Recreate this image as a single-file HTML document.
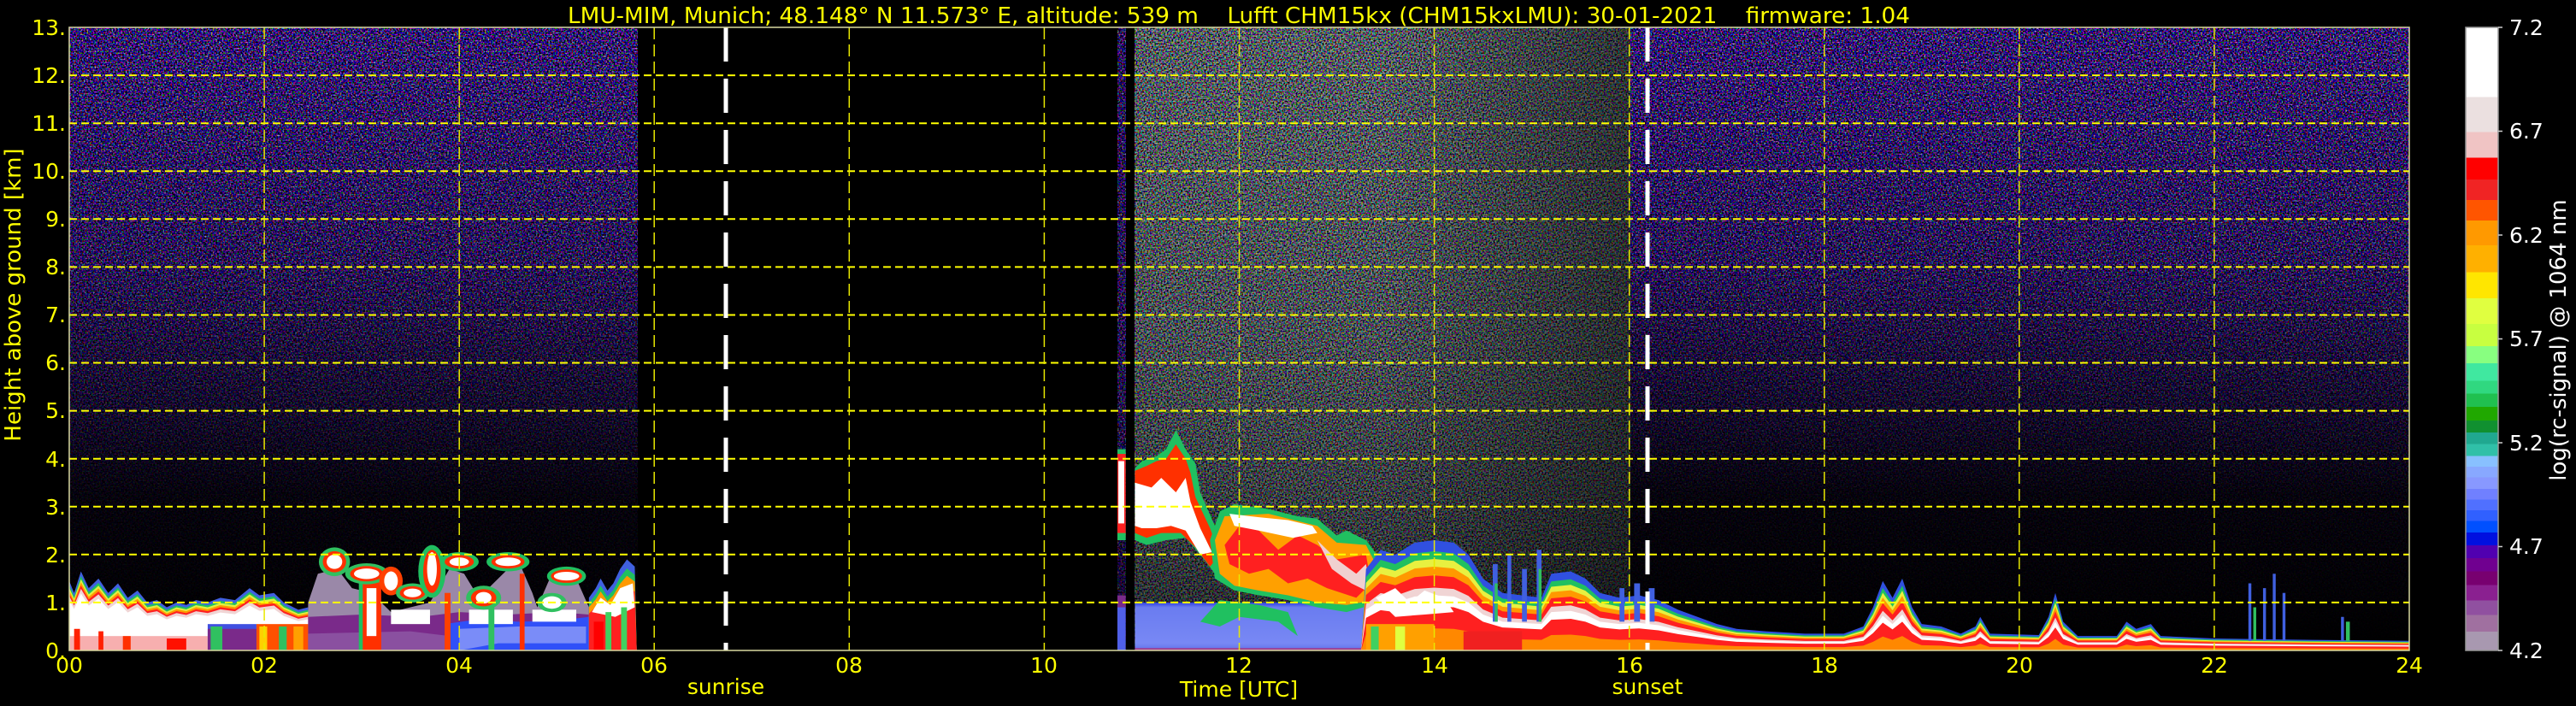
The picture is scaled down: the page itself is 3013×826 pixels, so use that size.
<!DOCTYPE html>
<html><head><meta charset="utf-8"><style>
html,body{margin:0;padding:0;background:#000;}
svg{display:block;}
text{font-family:"DejaVu Sans","Liberation Sans",sans-serif;}
</style></head><body>
<svg width="3013" height="826" viewBox="0 0 3013 826" xmlns="http://www.w3.org/2000/svg">
<defs>
<filter id="nd" x="0" y="0" width="1" height="1">
<feTurbulence type="fractalNoise" baseFrequency="0.55" numOctaves="1" seed="4"/>
<feColorMatrix values="3 0 0 0 -1.5  0 3 0 0 -1.65  0 0 3.2 0 -1.3  0 0 0 0 1"/>
</filter>
<filter id="nb" x="0" y="0" width="1" height="1">
<feTurbulence type="fractalNoise" baseFrequency="0.55" numOctaves="1" seed="9"/>
<feColorMatrix values="3.4 0 0 0 -1.45  0 3.4 0 0 -1.4  0 0 3.4 0 -1.35  0 0 0 0 1"/>
</filter>
<linearGradient id="fade" x1="0" y1="32" x2="0" y2="761" gradientUnits="userSpaceOnUse">
<stop offset="0" stop-color="#000" stop-opacity="0.15"/>
<stop offset="0.38" stop-color="#000" stop-opacity="0.35"/>
<stop offset="0.6" stop-color="#000" stop-opacity="0.65"/>
<stop offset="0.75" stop-color="#000" stop-opacity="0.9"/>
<stop offset="1" stop-color="#000" stop-opacity="1"/>
</linearGradient>
<linearGradient id="fadem" x1="0" y1="32" x2="0" y2="761" gradientUnits="userSpaceOnUse">
<stop offset="0" stop-color="#000" stop-opacity="0.3"/>
<stop offset="0.5" stop-color="#000" stop-opacity="0.4"/>
<stop offset="0.8" stop-color="#000" stop-opacity="0.55"/>
<stop offset="1" stop-color="#000" stop-opacity="0.7"/>
</linearGradient>
<linearGradient id="fadeh" x1="1327" y1="0" x2="1907" y2="0" gradientUnits="userSpaceOnUse">
<stop offset="0" stop-color="#000" stop-opacity="0"/>
<stop offset="0.5" stop-color="#000" stop-opacity="0"/>
<stop offset="1" stop-color="#000" stop-opacity="0.45"/>
</linearGradient>
<linearGradient id="blueg" x1="0" y1="0" x2="0" y2="1">
<stop offset="0" stop-color="#6070e8"/><stop offset="0.15" stop-color="#7888f4"/><stop offset="0.9" stop-color="#6a7cf0"/><stop offset="1" stop-color="#3040e0"/>
</linearGradient>
<linearGradient id="cb" x1="0" y1="0" x2="0" y2="1">
<stop offset="0" stop-color="#fff"/><stop offset="0.112" stop-color="#fff"/>
<stop offset="0.112" stop-color="#ebe0e0"/><stop offset="0.168" stop-color="#ebe0e0"/>
<stop offset="0.168" stop-color="#f0c4c4"/><stop offset="0.209" stop-color="#f0c4c4"/>
<stop offset="0.209" stop-color="#ff0000"/><stop offset="0.244" stop-color="#ff0000"/>
<stop offset="0.244" stop-color="#f02424"/><stop offset="0.277" stop-color="#f02424"/>
<stop offset="0.277" stop-color="#ff5500"/><stop offset="0.31" stop-color="#ff5500"/>
<stop offset="0.31" stop-color="#ff9900"/><stop offset="0.35" stop-color="#ff9900"/>
<stop offset="0.35" stop-color="#ffb000"/><stop offset="0.393" stop-color="#ffb000"/>
<stop offset="0.393" stop-color="#ffe600"/><stop offset="0.435" stop-color="#ffe600"/>
<stop offset="0.435" stop-color="#e0ff40"/><stop offset="0.476" stop-color="#e0ff40"/>
<stop offset="0.476" stop-color="#c8ff40"/><stop offset="0.512" stop-color="#c8ff40"/>
<stop offset="0.512" stop-color="#88ff80"/><stop offset="0.539" stop-color="#88ff80"/>
<stop offset="0.539" stop-color="#40e8a0"/><stop offset="0.567" stop-color="#40e8a0"/>
<stop offset="0.567" stop-color="#30d880"/><stop offset="0.588" stop-color="#30d880"/>
<stop offset="0.588" stop-color="#20c050"/><stop offset="0.609" stop-color="#20c050"/>
<stop offset="0.609" stop-color="#20a800"/><stop offset="0.631" stop-color="#20a800"/>
<stop offset="0.631" stop-color="#109030"/><stop offset="0.65" stop-color="#109030"/>
<stop offset="0.65" stop-color="#20a890"/><stop offset="0.669" stop-color="#20a890"/>
<stop offset="0.669" stop-color="#30c0a8"/><stop offset="0.688" stop-color="#30c0a8"/>
<stop offset="0.688" stop-color="#88c0ff"/><stop offset="0.705" stop-color="#88c0ff"/>
<stop offset="0.705" stop-color="#88a8ff"/><stop offset="0.722" stop-color="#88a8ff"/>
<stop offset="0.722" stop-color="#8898ff"/><stop offset="0.741" stop-color="#8898ff"/>
<stop offset="0.741" stop-color="#7080ff"/><stop offset="0.758" stop-color="#7080ff"/>
<stop offset="0.758" stop-color="#5070ff"/><stop offset="0.775" stop-color="#5070ff"/>
<stop offset="0.775" stop-color="#3060ff"/><stop offset="0.792" stop-color="#3060ff"/>
<stop offset="0.792" stop-color="#0050ff"/><stop offset="0.811" stop-color="#0050ff"/>
<stop offset="0.811" stop-color="#0010e0"/><stop offset="0.831" stop-color="#0010e0"/>
<stop offset="0.831" stop-color="#5000b0"/><stop offset="0.852" stop-color="#5000b0"/>
<stop offset="0.852" stop-color="#700090"/><stop offset="0.873" stop-color="#700090"/>
<stop offset="0.873" stop-color="#780070"/><stop offset="0.895" stop-color="#780070"/>
<stop offset="0.895" stop-color="#8a2090"/><stop offset="0.92" stop-color="#8a2090"/>
<stop offset="0.92" stop-color="#9050a0"/><stop offset="0.943" stop-color="#9050a0"/>
<stop offset="0.943" stop-color="#a070a0"/><stop offset="0.97" stop-color="#a070a0"/>
<stop offset="0.97" stop-color="#a898b0"/><stop offset="1" stop-color="#a898b0"/>
</linearGradient>
<clipPath id="pc"><rect x="81" y="32" width="2737" height="729"/></clipPath>
<polygon id="pA" points="0,0 0,1.45 0.05,1.2 0.12,1.65 0.2,1.3 0.3,1.5 0.4,1.2 0.5,1.4 0.6,1.1 0.7,1.25 0.8,1.0 0.9,1.05 1.0,0.9 1.1,1.0 1.2,0.95 1.3,1.05 1.42,1.0 1.55,1.1 1.7,1.05 1.85,1.3 1.95,1.15 2.1,1.2 2.2,1.0 2.35,0.85 2.45,0.9 2.45,0"/>
<polygon id="pD" points="5.33,0 5.33,1.1 5.4,1.3 5.45,1.5 5.52,1.25 5.58,1.4 5.65,1.7 5.72,1.9 5.8,1.75 5.82,0"/>
<polygon id="pH" points="13.25,0 13.3,1.7 13.45,2.1 13.6,2.0 13.8,2.25 14.0,2.3 14.2,2.25 14.35,2.0 14.5,1.5 14.7,1.2 14.9,1.15 15.1,1.1 15.2,1.6 15.4,1.65 15.55,1.5 15.7,1.2 15.9,1.1 16.1,1.15 16.3,1.05 16.5,0.85 16.7,0.7 16.9,0.55 17.1,0.45 17.4,0.4 17.8,0.35 18.2,0.35 18.4,0.5 18.5,0.9 18.6,1.45 18.7,1.1 18.8,1.5 18.9,0.9 19.0,0.55 19.2,0.5 19.4,0.35 19.55,0.5 19.6,0.7 19.7,0.35 20.2,0.32 20.3,0.7 20.37,1.2 20.45,0.6 20.6,0.3 21.0,0.3 21.1,0.6 21.2,0.45 21.35,0.55 21.45,0.3 22.0,0.25 23.0,0.22 24,0.2 24,0"/>
</defs>

<!-- noise -->
<g clip-path="url(#pc)">
<rect x="81" y="32" width="665" height="729" filter="url(#nd)"/>
<rect x="1307" y="32" width="10" height="729" filter="url(#nd)"/>
<rect x="1327" y="32" width="580" height="729" filter="url(#nb)"/>
<rect x="1907" y="32" width="911" height="729" filter="url(#nd)"/>
<rect x="81" y="32" width="665" height="729" fill="url(#fade)"/>
<rect x="1907" y="32" width="911" height="729" fill="url(#fade)"/>
<rect x="1307" y="32" width="600" height="729" fill="url(#fadem)"/>
<rect x="1327" y="32" width="580" height="729" fill="url(#fadeh)"/>
<rect x="1317" y="32" width="10" height="729" fill="#000"/>

<g transform="translate(81 761) scale(114.0417 -56.077)">
<!-- left block -->
<use href="#pA" fill="#4060e0"/>
<use href="#pA" fill="#20c060" transform="scale(1 0.94)"/>
<use href="#pA" fill="#e0f040" transform="scale(1 0.9)"/>
<use href="#pA" fill="#ff9900" transform="scale(1 0.86)"/>
<use href="#pA" fill="#ff2020" transform="scale(1 0.82)"/>
<use href="#pA" fill="#f0d4d4" transform="scale(1 0.78)"/>
<use href="#pA" fill="#ffffff" transform="scale(1 0.72)"/>
<rect x="0" y="0" width="1.42" height="0.3" fill="#f06060" opacity="0.5"/>
<rect x="0.05" y="0" width="0.06" height="0.45" fill="#ff2000"/>
<rect x="0.3" y="0" width="0.05" height="0.4" fill="#ff2000"/>
<rect x="0.55" y="0" width="0.08" height="0.3" fill="#ff3000"/>
<rect x="1.0" y="0" width="0.2" height="0.25" fill="#ff1000"/>
<rect x="1.42" y="0" width="0.5" height="0.55" fill="#4050e0"/>
<rect x="1.42" y="0" width="0.5" height="0.45" fill="#7a2a8a"/>
<rect x="1.45" y="0" width="0.12" height="0.5" fill="#30c060"/>
<rect x="1.92" y="0" width="0.55" height="0.55" fill="#ff5000"/>
<rect x="1.95" y="0" width="0.08" height="0.5" fill="#ffd000"/>
<rect x="2.15" y="0" width="0.08" height="0.5" fill="#30c060"/>
<rect x="2.3" y="0" width="0.1" height="0.5" fill="#ffa000"/>
<!-- 2.45-5.35 -->
<polygon fill="#9a88a8" points="2.45,0 2.45,1.0 2.55,1.6 2.75,1.7 2.9,1.3 3.1,1.2 3.3,0.8 3.7,1.0 3.9,1.7 4.05,1.6 4.2,1.1 4.4,1.5 4.6,1.9 4.75,1.2 4.8,0.9 4.95,1.6 5.2,1.5 5.33,0.9 5.33,0"/>
<polygon fill="#7a2a8a" points="2.45,0 2.45,0.7 3.0,0.75 3.6,0.7 4.0,0.8 4.5,0.75 5.0,0.8 5.33,0.75 5.33,0"/>
<polygon fill="#8a50a0" points="2.45,0 2.45,0.35 3.5,0.4 3.9,0.3 3.9,0"/>
<polygon fill="#3050f8" points="3.85,0 3.85,0.55 4.2,0.65 4.6,0.6 5.0,0.62 5.33,0.7 5.33,0"/>
<polygon fill="#7a8cf8" points="4.0,0 4.0,0.45 4.6,0.5 5.3,0.5 5.3,0.15 4.4,0.15"/>
<rect x="3.3" y="0.55" width="0.4" height="0.3" fill="#ffffff"/>
<rect x="4.1" y="0.55" width="0.45" height="0.3" fill="#ffffff"/>
<rect x="4.75" y="0.6" width="0.45" height="0.25" fill="#ffffff"/>
<rect x="3.0" y="0" width="0.2" height="1.5" fill="#ff3000"/>
<rect x="3.05" y="0.3" width="0.1" height="1.0" fill="#ffffff"/>
<rect x="2.97" y="0" width="0.04" height="1.5" fill="#20c060"/>
<rect x="3.85" y="0" width="0.06" height="1.2" fill="#ff4000"/>
<rect x="4.3" y="0" width="0.06" height="1.2" fill="#30c060"/>
<rect x="4.62" y="0" width="0.05" height="1.6" fill="#ff3000"/>
<!-- clouds -->
<g>
<ellipse cx="2.72" cy="1.85" rx="0.16" ry="0.3" fill="#30c060"/>
<ellipse cx="2.72" cy="1.85" rx="0.12" ry="0.22" fill="#ff3000"/>
<ellipse cx="2.72" cy="1.85" rx="0.08" ry="0.15" fill="#fff"/>
<ellipse cx="3.05" cy="1.6" rx="0.22" ry="0.22" fill="#30c060"/>
<ellipse cx="3.05" cy="1.6" rx="0.17" ry="0.16" fill="#ff3000"/>
<ellipse cx="3.05" cy="1.6" rx="0.13" ry="0.11" fill="#fff"/>
<ellipse cx="3.3" cy="1.45" rx="0.12" ry="0.3" fill="#ff4000"/>
<ellipse cx="3.3" cy="1.45" rx="0.07" ry="0.2" fill="#fff"/>
<ellipse cx="3.52" cy="1.2" rx="0.17" ry="0.2" fill="#30c060"/>
<ellipse cx="3.52" cy="1.2" rx="0.13" ry="0.14" fill="#ff3000"/>
<ellipse cx="3.52" cy="1.2" rx="0.09" ry="0.09" fill="#fff"/>
<ellipse cx="3.72" cy="1.65" rx="0.14" ry="0.55" fill="#20c060"/>
<ellipse cx="3.72" cy="1.65" rx="0.09" ry="0.45" fill="#ff3000"/>
<ellipse cx="3.72" cy="1.7" rx="0.05" ry="0.35" fill="#fff"/>
<ellipse cx="4.0" cy="1.85" rx="0.2" ry="0.2" fill="#20c060"/>
<ellipse cx="4.0" cy="1.85" rx="0.15" ry="0.14" fill="#ff3000"/>
<ellipse cx="4.0" cy="1.85" rx="0.1" ry="0.09" fill="#fff"/>
<ellipse cx="4.25" cy="1.1" rx="0.18" ry="0.25" fill="#30c060"/>
<ellipse cx="4.25" cy="1.1" rx="0.13" ry="0.18" fill="#ff3000"/>
<ellipse cx="4.25" cy="1.1" rx="0.08" ry="0.12" fill="#fff"/>
<ellipse cx="4.5" cy="1.85" rx="0.22" ry="0.2" fill="#20c060"/>
<ellipse cx="4.5" cy="1.85" rx="0.17" ry="0.14" fill="#ff3000"/>
<ellipse cx="4.5" cy="1.85" rx="0.13" ry="0.09" fill="#fff"/>
<ellipse cx="4.95" cy="1.0" rx="0.15" ry="0.2" fill="#30c060"/>
<ellipse cx="4.95" cy="1.0" rx="0.1" ry="0.13" fill="#fff"/>
<ellipse cx="5.1" cy="1.55" rx="0.2" ry="0.2" fill="#20c060"/>
<ellipse cx="5.1" cy="1.55" rx="0.16" ry="0.14" fill="#ff3000"/>
<ellipse cx="5.1" cy="1.55" rx="0.13" ry="0.09" fill="#fff"/>
</g>
<use href="#pD" fill="#4060e0"/>
<use href="#pD" fill="#20c060" transform="scale(1 0.9)"/>
<use href="#pD" fill="#ff9900" transform="scale(1 0.82)"/>
<use href="#pD" fill="#ff2020" transform="scale(1 0.7)"/>
<polygon fill="#ffffff" points="5.36,0.8 5.45,1.1 5.55,0.95 5.65,1.3 5.78,1.4 5.8,0.9 5.6,0.7"/>
<rect x="5.38" y="0" width="0.1" height="0.6" fill="#ff0000"/>
<rect x="5.5" y="0" width="0.06" height="0.8" fill="#40d060"/>
<rect x="5.66" y="0" width="0.06" height="0.9" fill="#40d060"/>

<!-- middle -->
<rect x="10.75" y="0" width="0.085" height="1.0" fill="#5060e8"/>
<rect x="10.75" y="0.9" width="0.085" height="0.25" fill="#7a2a8a"/>
<rect x="10.75" y="2.3" width="0.085" height="1.9" fill="#20c060"/>
<rect x="10.75" y="2.45" width="0.085" height="1.65" fill="#ff2020"/>
<rect x="10.76" y="2.65" width="0.06" height="1.3" fill="#ffffff"/>
<rect x="10.93" y="0" width="2.35" height="1.0" fill="url(#blueg)"/>
<rect x="10.93" y="0" width="2.35" height="0.05" fill="#a04090"/>
<polygon fill="#20c060" points="11.6,0.6 11.8,1.05 12.2,0.95 12.5,0.8 12.6,0.3 12.4,0.6 12.0,0.7 11.8,0.5"/>
<!-- cloud F -->
<polygon fill="#20c060" points="10.93,2.3 10.93,3.8 11.0,3.95 11.15,4.05 11.25,4.2 11.35,4.6 11.45,4.2 11.55,3.9 11.6,3.3 11.75,2.6 11.85,2.0 11.75,1.6 11.6,2.0 11.45,2.35 11.25,2.3 11.05,2.2"/>
<polygon fill="#ff3000" points="10.93,2.45 10.93,3.75 11.05,3.85 11.15,3.95 11.25,4.0 11.35,4.3 11.45,4.0 11.5,3.7 11.55,3.2 11.7,2.55 11.8,2.0 11.7,1.75 11.55,2.15 11.4,2.45 11.2,2.45 11.05,2.35"/>
<polygon fill="#ffffff" points="10.93,2.6 10.93,3.5 11.1,3.4 11.2,3.6 11.35,3.3 11.45,3.6 11.5,3.1 11.6,2.55 11.72,2.05 11.6,2.0 11.45,2.5 11.3,2.6 11.15,2.55 11.0,2.55"/>
<!-- layer G -->
<polygon fill="#20c060" points="11.7,2.3 11.8,2.9 11.95,3.05 12.3,2.95 12.6,2.8 12.8,2.75 13.0,2.4 13.1,2.5 13.3,2.3 13.45,1.9 13.45,1.0 13.1,0.8 12.8,0.9 12.5,1.05 12.2,1.15 11.95,1.25 11.75,1.5"/>
<polygon fill="#ffa000" points="11.75,2.3 11.85,2.8 12.3,2.85 12.6,2.7 12.8,2.6 13.0,2.25 13.3,2.2 13.4,1.8 13.4,1.05 13.1,0.95 12.8,1.0 12.5,1.15 12.2,1.25 11.95,1.35 11.8,1.6"/>
<polygon fill="#ff2020" points="11.85,2.2 12.0,2.6 12.2,2.5 12.4,2.1 12.6,2.4 12.8,2.2 13.0,1.9 13.3,2.0 13.35,1.4 13.2,1.1 12.9,1.3 12.7,1.5 12.5,1.4 12.3,1.7 12.1,1.6 11.9,1.8"/>
<polygon fill="#ffffff" points="11.9,2.85 12.2,2.78 12.5,2.72 12.75,2.6 12.8,2.45 12.55,2.35 12.2,2.5 11.95,2.6"/>
<polygon fill="#f0d0d0" points="12.8,2.3 13.0,1.9 13.2,1.6 13.3,1.8 13.35,1.2 13.15,1.4 12.95,1.7"/>
<!-- H block -->
<use href="#pH" fill="#3050e0"/>
<use href="#pH" fill="#20c060" transform="scale(1 0.9)"/>
<use href="#pH" fill="#e8f040" transform="scale(1 0.83)"/>
<use href="#pH" fill="#ff9900" transform="scale(1 0.76)"/>
<use href="#pH" fill="#ff2020" transform="scale(1 0.68)"/>
<use href="#pH" fill="#f0d4d4" transform="scale(1 0.57)"/>
<use href="#pH" fill="#ffffff" transform="scale(1 0.5)"/>
<use href="#pH" fill="#ff2020" transform="scale(1 0.4)"/>
<use href="#pH" fill="#ff8800" transform="scale(1 0.2)"/>
<rect x="13.3" y="0" width="0.7" height="0.55" fill="#ffa000"/>
<rect x="13.35" y="0" width="0.08" height="0.5" fill="#40d060"/>
<rect x="13.6" y="0" width="0.1" height="0.5" fill="#e0ff40"/>
<rect x="14.3" y="0" width="0.6" height="0.4" fill="#f02020"/>
<polygon fill="#ffffff" points="13.4,1.1 13.6,1.3 13.75,1.0 13.9,1.25 14.1,1.1 14.2,0.8 13.9,0.75 13.6,0.7"/>
<!-- spikes -->
<g fill="#4060e0">
<rect x="14.6" y="0.6" width="0.05" height="1.2"/>
<rect x="14.75" y="0.6" width="0.04" height="1.4"/>
<rect x="14.9" y="0.6" width="0.05" height="1.1"/>
<rect x="15.05" y="0.6" width="0.05" height="1.5"/>
<rect x="15.9" y="0.6" width="0.05" height="0.7"/>
<rect x="16.05" y="0.6" width="0.06" height="0.8"/>
<rect x="16.2" y="0.6" width="0.06" height="0.7"/>
<rect x="22.35" y="0.2" width="0.03" height="1.2"/>
<rect x="22.5" y="0.2" width="0.03" height="1.1"/>
<rect x="22.6" y="0.2" width="0.03" height="1.4"/>
<rect x="22.7" y="0.2" width="0.03" height="1.0"/>
<rect x="23.3" y="0.2" width="0.03" height="0.5"/>
</g>
<g fill="#30c060">
<rect x="14.62" y="0.6" width="0.03" height="0.8"/>
<rect x="15.07" y="0.6" width="0.03" height="1.1"/>
<rect x="22.4" y="0.2" width="0.03" height="0.7"/>
<rect x="23.35" y="0.2" width="0.04" height="0.4"/>
</g>
</g>
</g>

<!-- grid -->
<g stroke="#ffff00" stroke-width="2" stroke-dasharray="9,5" fill="none">
<path d="M81 704.9H2818M81 648.8H2818M81 592.8H2818M81 536.7H2818M81 480.6H2818M81 424.5H2818M81 368.5H2818M81 312.4H2818M81 256.3H2818M81 200.2H2818M81 144.2H2818M81 88.1H2818"/>
</g>
<g stroke="#e8e800" stroke-width="1.5" stroke-dasharray="14,6" fill="none">
<path d="M309.1 32V761M537.2 32V761M765.2 32V761M993.3 32V761M1221.4 32V761M1449.5 32V761M1677.6 32V761M1905.7 32V761M2133.8 32V761M2361.8 32V761M2589.9 32V761"/>
</g>
<!-- sunrise / sunset -->
<g stroke="#ffffff" stroke-width="5" stroke-dasharray="40,20" fill="none">
<path d="M849 32V761M1927 32V761"/>
</g>
<!-- frame -->
<rect x="81" y="32" width="2737" height="729" fill="none" stroke="#d8d8a0" stroke-width="1.5"/>

<!-- title -->
<text x="1449" y="27" fill="#ffff00" font-size="26" text-anchor="middle" textLength="1570" lengthAdjust="spacingAndGlyphs" style="white-space:pre">LMU-MIM, Munich; 48.148° N 11.573° E, altitude: 539 m    Lufft CHM15kx (CHM15kxLMU): 30-01-2021    firmware: 1.04</text>

<!-- y ticks -->
<g fill="#ffff00" font-size="25" text-anchor="end">
<text x="77" y="41">13.</text><text x="77" y="97">12.</text><text x="77" y="153">11.</text>
<text x="77" y="209">10.</text><text x="77" y="265">9.</text><text x="77" y="321">8.</text>
<text x="77" y="377">7.</text><text x="77" y="433">6.</text><text x="77" y="489">5.</text>
<text x="77" y="546">4.</text><text x="77" y="602">3.</text><text x="77" y="658">2.</text>
<text x="77" y="714">1.</text><text x="77" y="770">0.</text>
</g>
<text transform="translate(24 345) rotate(-90)" fill="#ffff00" font-size="26" text-anchor="middle">Height above ground [km]</text>

<!-- x ticks -->
<g fill="#ffff00" font-size="25" text-anchor="middle">
<text x="81" y="787">00</text><text x="309" y="787">02</text><text x="537" y="787">04</text>
<text x="765" y="787">06</text><text x="993" y="787">08</text><text x="1221" y="787">10</text>
<text x="1449" y="787">12</text><text x="1678" y="787">14</text><text x="1906" y="787">16</text>
<text x="2134" y="787">18</text><text x="2362" y="787">20</text><text x="2590" y="787">22</text>
<text x="2818" y="787">24</text>
<text x="849" y="812">sunrise</text>
<text x="1449" y="815">Time [UTC]</text>
<text x="1927" y="812">sunset</text>
</g>

<!-- colorbar -->
<rect x="2884" y="32" width="38" height="729" fill="url(#cb)"/>
<rect x="2884" y="32" width="38" height="729" fill="none" stroke="#999" stroke-width="1.5"/>
<g stroke="#ccc" stroke-width="1.5">
<path d="M2922 32h5M2922 153.5h5M2922 275h5M2922 396.5h5M2922 518h5M2922 639.5h5M2922 761h5"/>
</g>
<g fill="#ffffff" font-size="25">
<text x="2935" y="41">7.2</text><text x="2935" y="162">6.7</text><text x="2935" y="284">6.2</text>
<text x="2935" y="405">5.7</text><text x="2935" y="527">5.2</text><text x="2935" y="648">4.7</text>
<text x="2935" y="770">4.2</text>
</g>
<text transform="translate(3001 398) rotate(-90)" fill="#ffffff" font-size="26" text-anchor="middle">log(rc-signal) @ 1064 nm</text>
</svg>
</body></html>
